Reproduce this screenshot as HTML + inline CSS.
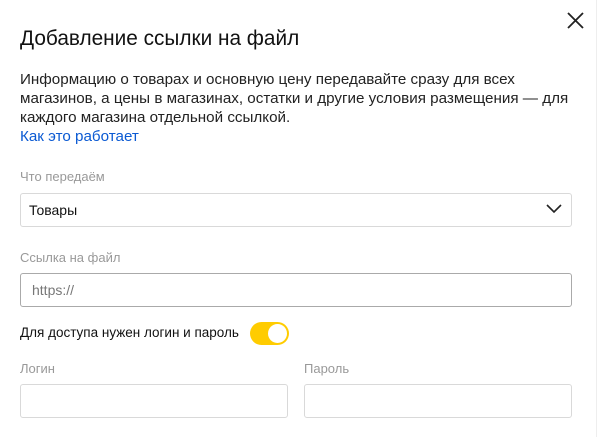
<!DOCTYPE html>
<html><head><meta charset="utf-8"><style>
body{margin:0;width:600px;height:437px;background:#fff;font-family:"Liberation Sans",sans-serif;position:relative;overflow:hidden;color:#000}
.a{position:absolute;white-space:nowrap}
.box{position:absolute;border:1px solid #d9d9d9;border-radius:3px;box-sizing:border-box;height:34px}
.lbl{position:absolute;font-size:13px;color:#999}
</style></head><body>
<div style="position:absolute;right:3px;top:0;width:1px;height:437px;background:#eee"></div>
<svg class="a" style="left:566px;top:11px" width="19" height="19" viewBox="0 0 19 19"><path d="M2 2L17 17M17 2L2 17" stroke="#222" stroke-width="1.8"/></svg>
<div class="a" style="left:20px;top:27px;font-size:20.8px;color:#111">Добавление ссылки на файл</div>
<div class="a" style="left:20px;top:70px;font-size:15.2px;line-height:19px;color:#222">Информацию о товарах и основную цену передавайте сразу для всех<br>магазинов, а цены в магазинах, остатки и другие условия размещения — для<br>каждого магазина отдельной ссылкой.<br><span style="color:#0b5ad3">Как это работает</span></div>
<div class="lbl" style="left:20px;top:169px">Что передаём</div>
<div class="box" style="left:20px;top:193px;width:552px"></div>
<div class="a" style="left:29px;top:202px;font-size:14px;color:#111">Товары</div>
<svg class="a" style="left:546px;top:204px" width="16" height="10" viewBox="0 0 16 10"><path d="M1 1L8 8L15 1" fill="none" stroke="#222" stroke-width="1.6"/></svg>
<div class="lbl" style="left:20px;top:250px">Ссылка на файл</div>
<div class="box" style="left:20px;top:273px;width:552px;border-color:#aaa"></div>
<div class="a" style="left:32px;top:282px;font-size:14px;color:#777">https://</div>
<div class="a" style="left:20px;top:325px;font-size:13.5px;color:#111">Для доступа нужен логин и пароль</div>
<div class="a" style="left:250px;top:322px;width:39px;height:23px;border-radius:12px;background:#fc0"></div>
<div class="a" style="left:268px;top:324px;width:19px;height:19px;border-radius:50%;background:#fff"></div>
<div class="lbl" style="left:20px;top:361px">Логин</div>
<div class="lbl" style="left:304px;top:361px">Пароль</div>
<div class="box" style="left:20px;top:384px;width:268px"></div>
<div class="box" style="left:304px;top:384px;width:268px"></div>
</body></html>
